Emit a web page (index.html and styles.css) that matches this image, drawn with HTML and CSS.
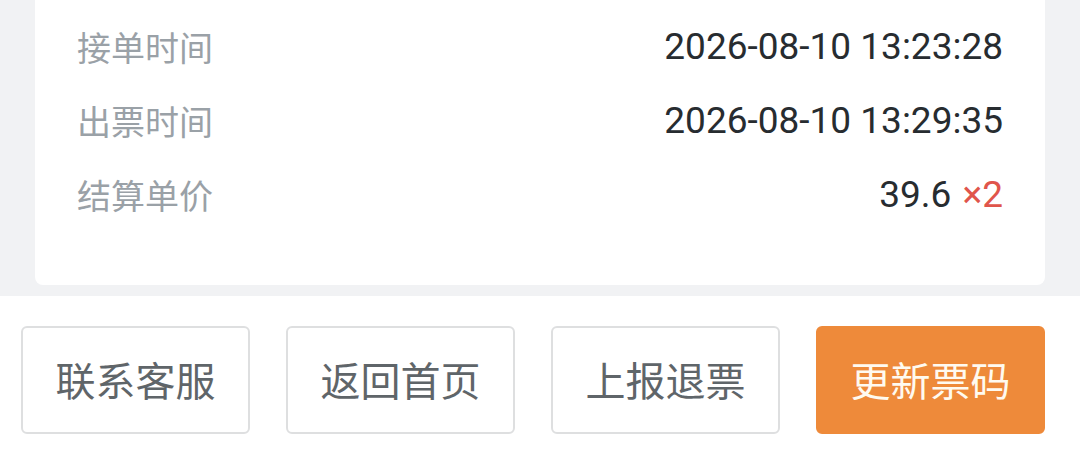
FILE: index.html
```html
<!DOCTYPE html>
<html lang="zh-CN">
<head>
<meta charset="utf-8">
<link rel="stylesheet" href="styles.css">
</head>
<body>
<div class="page">
  <section class="top">
    <div class="card">
      <div class="row"><span class="label">接单时间</span><span class="value">2026-08-10 13:23:28</span></div>
      <div class="row"><span class="label">出票时间</span><span class="value">2026-08-10 13:29:35</span></div>
      <div class="row"><span class="label">结算单价</span><span class="value">39.6 <span class="qty">×2</span></span></div>
    </div>
  </section>
  <footer class="bar">
    <button class="btn">联系客服</button>
    <button class="btn">返回首页</button>
    <button class="btn">上报退票</button>
    <button class="btn primary">更新票码</button>
  </footer>
</div>
</body>
</html>
```
FILE: styles.css
```css
html, body {
  margin: 0;
  padding: 0;
  background: #ffffff;
}
body {
  width: 1080px;
  height: 464px;
  overflow: hidden;
  font-family: Roboto, "Noto Sans CJK SC", sans-serif;
}
.top {
  background: #f1f2f4;
  padding: 0 35px 11px 35px;
}
.card {
  background: #ffffff;
  border-radius: 0 0 8px 8px;
  padding: 9px 42px 54px 42px;
}
.row {
  height: 74px;
  display: flex;
  align-items: center;
  justify-content: space-between;
}
.label {
  font-family: "Noto Sans CJK SC", sans-serif;
  font-size: 34px;
  color: #9aa1a7;
}
.value {
  font-family: Roboto, "Noto Sans CJK SC", sans-serif;
  font-size: 37px;
  color: #272c30;
}
.qty {
  margin-left: 2px;
  color: #e0554b;
}
.bar {
  display: grid;
  grid-template-columns: repeat(4, 1fr);
  column-gap: 36px;
  padding: 30px 35px 0 21px;
}
.btn {
  height: 108px;
  box-sizing: border-box;
  border: 2px solid #dedfe0;
  border-radius: 6px;
  background: #ffffff;
  color: #5f6569;
  font-family: "Noto Sans CJK SC", sans-serif;
  font-size: 40px;
  padding: 0 0 2px 0;
}
.btn.primary {
  background: #ee8a3a;
  border-color: #ee8a3a;
  color: #fffaf0;
}
```
